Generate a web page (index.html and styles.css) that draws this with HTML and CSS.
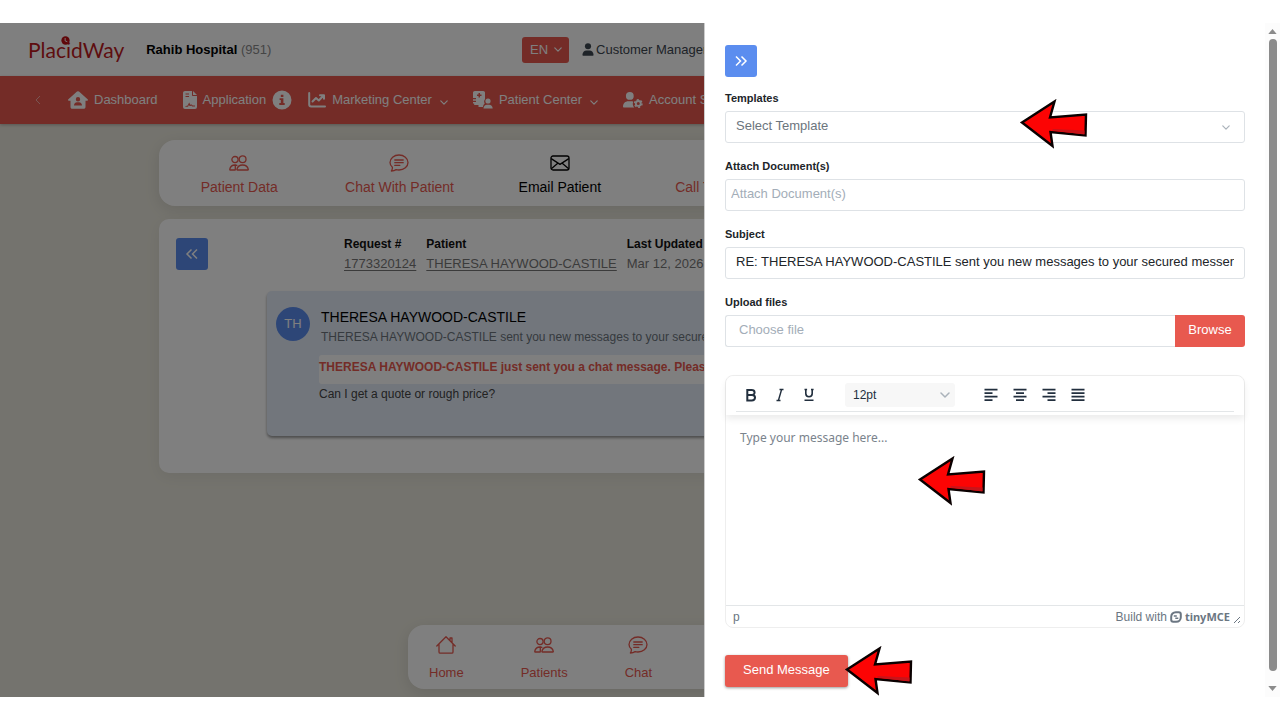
FILE: index.html
```html
<!DOCTYPE html>
<html lang="en">
<head>
    <meta charset="UTF-8">
    <meta name="viewport" content="width=device-width, initial-scale=1.0">
    <title>PlacidWay - Email Patient</title>
    <link rel="stylesheet" href="styles.css">
</head>
<body>
    <!-- Shared icons -->
    <svg class="sprite" aria-hidden="true">
        <symbol id="i-people" viewBox="0 0 20 16">
            <g fill="none" stroke="currentColor" stroke-width="1.3" stroke-linecap="round" stroke-linejoin="round">
                <circle cx="6" cy="4.6" r="3.1"/>
                <circle cx="13.6" cy="4.2" r="3.4"/>
                <path d="M8.4 15h10.4c.4 0 .6-.3.5-.7-.5-2.4-2.6-4.3-5.7-4.3s-5.2 1.9-5.7 4.3c-.1.4.1.7.5.7z"/>
                <path d="M6.2 15H1.100c-.3 0-.5-.3-.4-.6C1.200 12 3 10 6 10c.7 0 1.300.1 1.900.3M6.300 10v4.500"/>
            </g>
        </symbol>
        <symbol id="i-chat" viewBox="0 0 20 18">
            <g fill="none" stroke="currentColor" stroke-width="1.3" stroke-linecap="round" stroke-linejoin="round">
                <path d="M3.400 13.200C1.900 11.900 1 10.300 1 8.500 1 4.400 5 1 10 1s9 3.400 9 7.500S15 16 10 16c-1 0-2-.1-2.900-.4-1 .7-2.700 1.300-4.700 1.400.8-1 1.200-2.400 1-3.800z"/>
                <path d="M5.800 6h8.400M5.800 8.700h8.400M5.800 11.400h5"/>
            </g>
        </symbol>
        <symbol id="i-mail" viewBox="0 0 20 16">
            <g fill="none" stroke="currentColor" stroke-width="1.3" stroke-linejoin="round">
                <rect x="1" y="1" width="18" height="14" rx="2"/>
                <path d="M1.200 3.600L10 9.400l8.800-5.800M1.300 13.700l6.500-5.500M18.700 13.700l-6.500-5.500"/>
            </g>
        </symbol>
        <symbol id="i-phone" viewBox="0 0 18 18">
            <path fill="none" stroke="currentColor" stroke-width="1.200" d="M3 2l3-1 2 4-2 2c1 2 3 4 5 5l2-2 4 2-1 3c-1 2-4 1-6 0C6 13 3 10 2 6c-1-2 0-3 1-4z"/>
        </symbol>
        <symbol id="i-home" viewBox="0 0 20 18">
            <path fill="none" stroke="currentColor" stroke-width="1.300" stroke-linecap="round" stroke-linejoin="round" d="M.8 10L10 .8 19.200 10M3 8.200V16c0 .7.5 1.200 1.200 1.200h11.600c.7 0 1.200-.5 1.200-1.200V8.200M14 4.400V2h2v4.600"/>
        </symbol>
        <symbol id="i-down" viewBox="0 0 10 6">
            <path fill="none" stroke="currentColor" stroke-width="1.500" stroke-linecap="round" stroke-linejoin="round" d="M1 1l4 4 4-4"/>
        </symbol>
        <symbol id="i-user" viewBox="0 0 12 14">
            <circle cx="6" cy="3.500" r="3.300"/>
            <path d="M0 13c0-3 1.800-5 4.400-5h3.200c2.600 0 4.400 2 4.400 5 0 .5-.3.800-.8.800H.8C.3 13.800 0 13.500 0 13z"/>
        </symbol>
        <symbol id="i-arrow" viewBox="0 0 68 50">
            <path fill="#fc0404" stroke="#0a0000" stroke-width="2.400" d="M2 23.500L34.500 2.500l-4.500 16 36-3-.5 21L30.500 33l2 14z"/>
            <path fill="#c8141a" d="M32 31.500l1-1.500 31.500 1.500v4z"/>
        </symbol>
    </svg>

    <div class="screen">
        <div class="page">
            <header class="topbar">
                <div class="brand">
                    <a class="logo" href="#">
                        PlacidWay
                        <svg class="logo-mark" viewBox="0 0 10 10" aria-hidden="true">
                            <circle cx="5" cy="5" r="4.600" fill="#c00f14"/>
                            <path d="M4.600 2.200v3.200l2.400 1" fill="none" stroke="#fff" stroke-width="1"/>
                        </svg>
                    </a>
                    <div class="hospital"><strong>Rahib Hospital</strong> <span>(951)</span></div>
                </div>
                <button class="lang" type="button">EN <svg class="chevron"><use href="#i-down"/></svg></button>
                <a class="account" href="#"><svg><use href="#i-user"/></svg>Customer Manager</a>
            </header>

            <nav class="mainnav">
                <button class="nav-prev" type="button" aria-label="Previous">
                    <svg viewBox="0 0 6 10"><path d="M5 1L1 5l4 4" fill="none" stroke="currentColor"/></svg>
                </button>
                <a href="#">
                    <svg class="nav-icon" viewBox="0 0 20 18">
                        <path fill-rule="evenodd" d="M9 .6a1.500 1.500 0 0 1 2 0l8.600 7.600c.7.600.3 1.600-.6 1.600h-1.500V16c0 1-.8 1.800-1.800 1.800H4.300c-1 0-1.800-.8-1.800-1.800V9.800H1c-.9 0-1.300-1-.6-1.600zM10 6a2.200 2.200 0 1 0 0 4.400A2.200 2.200 0 0 0 10 6zM6 14.500h8c0-2-1.200-3.300-3-3.300H9c-1.800 0-3 1.300-3 3.300z"/>
                    </svg>
                    Dashboard
                </a>
                <a href="#">
                    <svg class="nav-icon doc" viewBox="0 0 14 18">
                        <path fill-rule="evenodd" d="M2 0h7v4c0 .6.4 1 1 1h4v11a2 2 0 0 1-2 2H2a2 2 0 0 1-2-2V2C0 .9.9 0 2 0zm8 0l4 4h-4zM2.500 2.500v1h3.500v-1zm0 2.500v1h3.500V5zM2.400 15l2-.2c.8-1.200 1.400-2.600 1.800-3.200.7 1 .7 2 1.200 2.200.5-.4.9-.6 1.300-.2l1 .8H12v1H9.200l-1-.9c-1.200 1-2 .5-2.300-.4L5 15.800H2.400z"/>
                    </svg>
                    Application
                    <svg class="info" viewBox="0 0 20 20">
                        <path fill-rule="evenodd" d="M10 .5a9.500 9.500 0 1 0 0 19 9.500 9.500 0 0 0 0-19zM8.800 4.700h2.600v2.200H8.800zM7.600 8.200h3.800v4.900h1.300v1.800H7.300v-1.800h1.500V10H7.600z"/>
                    </svg>
                </a>
                <a href="#">
                    <svg class="nav-icon chart" viewBox="0 0 18 16">
                        <path d="M1.200 1v11.500c0 1.200.8 2 2 2H17M4.500 9.500L8 6l2.800 2.500 4.500-4.700M12 3.200h4v3.600" fill="none" stroke="currentColor" stroke-width="2" stroke-linecap="round" stroke-linejoin="round"/>
                    </svg>
                    Marketing Center
                    <svg class="chevron"><use href="#i-down"/></svg>
                </a>
                <a href="#">
                    <svg class="nav-icon" viewBox="0 0 20 18">
                        <path fill-rule="evenodd" d="M1.800 0h8.400c1 0 1.800.8 1.800 1.800v6.400c-.5.600-.9 1.400-.9 2.300 0 .8.200 1.400.6 2-1 .8-1.600 2-1.700 3.500H5.500v-2H1.200v-1.500H0V11h3V9.800H0V8.300h3V7H0V1.800C0 .8.800 0 1.800 0zM5.500 2v1.500H4v1.500h1.500v1.500H7V5h1.500V3.500H7V2z"/>
                        <circle cx="15" cy="10" r="2.600"/>
                        <path d="M10.500 17.500c0-2.300 1.500-3.700 3.500-3.700h2c2 0 3.700 1.400 3.700 3.700z"/>
                    </svg>
                    Patient Center
                    <svg class="chevron"><use href="#i-down"/></svg>
                </a>
                <a class="last" href="#">
                    <svg class="nav-icon" viewBox="0 0 22 18">
                        <circle cx="7.500" cy="4.500" r="4.300"/>
                        <path d="M0 16.500c0-3.700 2.400-6 5.800-6h3.400c.7 0 1.400.1 2 .3-.8 2.300-.5 4.500 1.200 6.400H.8c-.5 0-.8-.3-.8-.7z"/>
                        <circle cx="16.800" cy="12.800" r="2.700" fill="none" stroke="currentColor" stroke-width="2"/>
                        <circle cx="16.800" cy="12.800" r="4.100" fill="none" stroke="currentColor" stroke-width="1.600" stroke-dasharray="2.150 2.150"/>
                    </svg>
                    Account S
                </a>
            </nav>

            <div class="workspace">
                <div class="tabs">
                    <a href="#"><svg><use href="#i-people"/></svg>Patient Data</a>
                    <a href="#"><svg><use href="#i-chat"/></svg>Chat With Patient</a>
                    <a class="active" href="#"><svg><use href="#i-mail"/></svg>Email Patient</a>
                    <a href="#"><svg><use href="#i-phone"/></svg>Call To Patient</a>
                </div>

                <section class="request">
                    <div class="request-head">
                        <button class="square" type="button" aria-label="Show requests">
                            <svg viewBox="0 0 14 12"><path d="M6.500 1.500L2 6l4.500 4.500M12 1.500L7.500 6l4.500 4.500"/></svg>
                        </button>
                        <table class="request-info">
                            <thead>
                                <tr><th>Request #</th><th>Patient</th><th>Last Updated</th></tr>
                            </thead>
                            <tbody>
                                <tr>
                                    <td><a href="#">1773320124</a></td>
                                    <td><a href="#">THERESA HAYWOOD-CASTILE</a></td>
                                    <td>Mar 12, 2026,</td>
                                </tr>
                            </tbody>
                        </table>
                    </div>
                    <article class="message">
                        <div class="avatar">TH</div>
                        <div class="message-text">
                            <h2>THERESA HAYWOOD-CASTILE</h2>
                            <p class="summary">THERESA HAYWOOD-CASTILE sent you new messages to your secured</p>
                            <p class="notice">THERESA HAYWOOD-CASTILE just sent you a chat message. Please</p>
                            <p class="quote">Can I get a quote or rough price?</p>
                        </div>
                    </article>
                </section>

                <nav class="dock">
                    <a href="#"><svg><use href="#i-home"/></svg>Home</a>
                    <a href="#"><svg><use href="#i-people"/></svg>Patients</a>
                    <a href="#"><svg><use href="#i-chat"/></svg>Chat</a>
                </nav>
            </div>
        </div>

        <div class="backdrop"></div>

        <aside class="drawer">
            <form class="compose">
                <button class="square" type="button" aria-label="Close">
                    <svg viewBox="0 0 14 12"><path d="M2 1.500L6.500 6 2 10.500M7.500 1.500L12 6l-4.500 4.500"/></svg>
                </button>

                <div class="field">
                    <label for="template">Templates</label>
                    <div class="select-wrap">
                        <select id="template" class="control">
                            <option>Select Template</option>
                        </select>
                        <svg class="chevron"><use href="#i-down"/></svg>
                        <svg class="arrow arrow-template"><use href="#i-arrow"/></svg>
                    </div>
                </div>
                <div class="field">
                    <label for="attach">Attach Document(s)</label>
                    <input id="attach" class="control attach" type="text" placeholder="Attach Document(s)">
                </div>
                <div class="field">
                    <label for="subject">Subject</label>
                    <input id="subject" class="control" type="text" value="RE: THERESA HAYWOOD-CASTILE sent you new messages to your secured messenger">
                </div>
                <div class="field">
                    <label for="upload">Upload files</label>
                    <div class="upload">
                        <input id="upload" class="control" type="text" placeholder="Choose file">
                        <button type="button">Browse</button>
                    </div>
                </div>

                <div class="editor">
                    <div class="toolbar">
                        <button type="button" aria-label="Bold"><svg viewBox="0 0 16 16"><path d="M4.300 3h4.200c4 0 4 4.700.6 4.900 4 .2 3.900 5.600-.4 5.600H4.300zM4.300 8H9" fill="none" stroke="currentColor" stroke-width="2"/></svg></button>
                        <button type="button" aria-label="Italic"><svg viewBox="0 0 16 16"><path d="M7.500 2.500h4M4.500 13.500h4M9.600 2.500l-3.200 11" fill="none" stroke="currentColor" stroke-width="1.400"/></svg></button>
                        <button type="button" aria-label="Underline"><svg viewBox="0 0 16 16"><path d="M4.800 2v4.500c0 4.300 6.400 4.300 6.400 0V2M3.500 13.200h9M3.500 2.500h2.600M10 2.500h2.600" fill="none" stroke="currentColor" stroke-width="1.600"/></svg></button>
                        <div class="select-wrap size">
                            <select aria-label="Font size"><option>12pt</option></select>
                            <svg class="chevron"><use href="#i-down"/></svg>
                        </div>
                        <button type="button" aria-label="Align left"><svg viewBox="0 0 16 16"><path d="M1.500 2.700h13M1.500 6.200h8M1.500 9.700h13M1.500 13.200h8"/></svg></button>
                        <button type="button" aria-label="Align center"><svg viewBox="0 0 16 16"><path d="M1.500 2.700h13M4 6.200h8M1.500 9.700h13M4 13.200h8"/></svg></button>
                        <button type="button" aria-label="Align right"><svg viewBox="0 0 16 16"><path d="M1.500 2.700h13M6.500 6.200h8M1.500 9.700h13M6.500 13.200h8"/></svg></button>
                        <button type="button" aria-label="Justify"><svg viewBox="0 0 16 16"><path d="M1.500 2.700h13M1.500 6.200h13M1.500 9.700h13M1.500 13.200h13"/></svg></button>
                    </div>
                    <textarea aria-label="Message" placeholder="Type your message here..."></textarea>
                    <div class="statusbar">
                        <span>p</span>
                        <a href="#">Build with
                            <svg class="tiny" viewBox="0 0 12 12">
                                <path d="M5.800 1.200h3a2 2 0 0 1 2 2v3c0 2.700-1.900 4.600-4.600 4.600h-3a2 2 0 0 1-2-2v-3c0-2.700 1.900-4.600 4.600-4.600z" fill="none" stroke="currentColor" stroke-width="2"/>
                                <path d="M3.800 4.300h3v1.400h-3zM5.300 6.600h3V8h-3z" fill="currentColor"/>
                            </svg>
                            <b>tinyMCE</b>
                        </a>
                        <svg class="grip" viewBox="0 0 8 8"><path d="M1 7l6-6M5 7l2-2" stroke="currentColor"/></svg>
                    </div>
                    <svg class="arrow arrow-editor"><use href="#i-arrow"/></svg>
                </div>

                <div class="actions">
                    <button class="send" type="submit">Send Message</button>
                    <svg class="arrow arrow-send"><use href="#i-arrow"/></svg>
                </div>
            </form>

            <div class="scrollbar" aria-hidden="true">
                <svg viewBox="0 0 10 6"><path d="M0 6l5-6 5 6z"/></svg>
                <div class="thumb"></div>
                <svg viewBox="0 0 10 6"><path d="M0 0l5 6 5-6z"/></svg>
            </div>
        </aside>
    </div>
</body>
</html>
```
FILE: styles.css
```css
* {
    box-sizing: border-box;
}

body {
    margin: 0;
    padding: 23px 0;
    height: 100vh;
    background: #fff;
    color: #212529;
    font-family: "Liberation Sans", Arial, sans-serif;
    font-size: 13px;
    line-height: 20px;
}

a {
    color: inherit;
    text-decoration: none;
}

button, input, select, textarea {
    font: inherit;
    color: inherit;
}

button {
    border: none;
    padding: 0;
    background: none;
    cursor: pointer;
}

svg {
    display: block;
    flex: none;
    fill: currentColor;
}

h2, p {
    margin: 0;
}

.sprite {
    position: absolute;
    width: 0;
    height: 0;
}

.screen {
    position: relative;
    height: 100%;
    overflow: hidden;
}

.page {
    display: flex;
    flex-direction: column;
    height: 100%;
    background: #e9e7dc;
    white-space: nowrap;
}

.backdrop {
    position: absolute;
    inset: 0;
    background: rgba(0, 0, 0, 0.5);
}

.chevron {
    width: 8px;
    height: 5px;
}

/* Top bar */
.topbar {
    display: flex;
    align-items: center;
    flex: none;
    height: 53px;
    padding-left: 28px;
    background: #fff;
}

.brand {
    display: flex;
    align-items: center;
    gap: 22px;
    flex: 0 0 494px;
}

.logo {
    position: relative;
    color: #bd1a1e;
    font-family: Lato, sans-serif;
    font-size: 21px;
    line-height: 28px;
}

.logo-mark {
    position: absolute;
    left: 33px;
    top: 0;
    width: 9px;
    height: 9px;
}

.hospital {
    color: #000;
}

.hospital span {
    color: #8a8a8a;
}

.lang {
    display: flex;
    align-items: center;
    gap: 6px;
    height: 26px;
    padding: 0 7px 0 8px;
    border-radius: 3px;
    background: #e8594f;
    color: #fff;
}

.account {
    display: flex;
    align-items: center;
    gap: 2px;
    margin-left: 13px;
    color: #3c4650;
}

.account svg {
    width: 12px;
    height: 13px;
}

/* Red navigation */
.mainnav {
    display: flex;
    align-items: center;
    gap: 25px;
    flex: none;
    height: 48px;
    padding-left: 35px;
    background: #e8594f;
    box-shadow: 0 1px 3px rgba(0, 0, 0, 0.25);
    color: #fff;
}

.mainnav a {
    display: flex;
    align-items: center;
    gap: 6px;
}

.nav-prev {
    margin-right: 2px;
    opacity: 0.5;
}

.nav-prev svg {
    width: 6px;
    height: 10px;
}

.nav-icon {
    width: 20px;
    height: 18px;
}

.nav-icon.doc {
    width: 14px;
}

.nav-icon.chart {
    width: 18px;
    height: 16px;
}

.info {
    width: 20px;
    height: 20px;
    margin-right: -9px;
}

.mainnav .chevron {
    margin: 4px 0 0 2px;
}

/* Workspace */
.workspace {
    display: flex;
    flex-direction: column;
    flex: 1;
    width: 962px;
    max-width: 100%;
    margin: 0 auto;
    padding: 16px 0 8px;
}

.tabs {
    display: grid;
    grid-template-columns: repeat(6, 1fr);
    padding: 13px 0 9px;
    border-radius: 16px;
    background: #fff;
    box-shadow: 0 4px 16px rgba(0, 0, 0, 0.1);
    color: #e8594f;
    font-size: 14px;
}

.tabs a, .dock a {
    display: flex;
    flex-direction: column;
    align-items: center;
    gap: 4px;
}

.tabs svg, .dock svg {
    width: 20px;
    height: 20px;
}

.tabs svg {
    height: 18px;
    margin: 1px 0;
}

.tabs .active {
    color: #000;
}

.request {
    margin-top: 13px;
    padding: 15px 17px 37px;
    border-radius: 10px;
    background: #fff;
    box-shadow: 0 4px 16px rgba(0, 0, 0, 0.06);
}

.request-head {
    display: flex;
    align-items: center;
    gap: 136px;
}

.square {
    display: flex;
    align-items: center;
    justify-content: center;
    flex: none;
    width: 32px;
    height: 32px;
    border-radius: 3px;
    background: #5b8def;
    color: #fff;
}

.square svg {
    width: 14px;
    height: 12px;
    fill: none;
    stroke: currentColor;
    stroke-width: 1.5;
}

.request-info {
    border-collapse: collapse;
    text-align: left;
    color: #777;
}

.request-info th {
    padding: 0;
    color: #111;
    font-size: 12px;
}

.request-info td {
    padding: 0 10px 0 0;
}

.request-info a {
    text-decoration: underline;
    text-underline-offset: 2px;
}

.message {
    display: flex;
    gap: 9px;
    height: 145px;
    margin: 17px 0 0 91px;
    padding: 16px 9px;
    border-radius: 5px;
    background: #e5edf9;
    box-shadow: 0 2px 3px rgba(0, 0, 0, 0.4);
    font-size: 12px;
}

.avatar {
    flex: none;
    width: 34px;
    height: 34px;
    border-radius: 50%;
    background: #5b8def;
    color: #fff;
    font-size: 13px;
    line-height: 34px;
    text-align: center;
}

.message-text {
    flex: 1;
    min-width: 0;
}

.message h2 {
    padding-left: 2px;
    color: #000;
    font-size: 14px;
    font-weight: normal;
}

.summary {
    padding-left: 2px;
    color: #6c757d;
}

.notice {
    height: 29px;
    margin-top: 8px;
    border-radius: 3px;
    background: #fff;
    color: #e8594f;
    font-weight: bold;
    line-height: 25px;
}

.quote {
    color: #444;
}

.dock {
    display: flex;
    gap: 57px;
    width: 464px;
    margin: auto auto 0;
    padding: 10px 21px 6px;
    border-radius: 16px;
    background: #fff;
    box-shadow: 0 4px 16px rgba(0, 0, 0, 0.1);
    color: #e8594f;
}

.dock a {
    gap: 8px;
}

/* Compose drawer */
.drawer {
    position: absolute;
    top: 0;
    right: 0;
    bottom: 0;
    display: flex;
    width: 45%;
    border-left: 1px solid #ccc;
    background: #fff;
}

.compose {
    flex: 1;
    min-width: 0;
    padding: 22px 20px 0;
}

.field {
    display: flex;
    flex-direction: column;
    gap: 5px;
    margin-top: 15px;
}

.square + .field {
    margin-top: 13px;
}

.field label {
    font-size: 11px;
    font-weight: bold;
    line-height: 16px;
}

.control {
    display: block;
    width: 100%;
    height: 32px;
    padding: 0 10px 3px;
    border: 1px solid #dee2e6;
    border-radius: 3px;
    background: #fff;
    outline: none;
}

.control::placeholder {
    color: #a3adb8;
    opacity: 1;
}

.attach {
    padding-left: 5px;
}

.select-wrap {
    position: relative;
}

.select-wrap select {
    appearance: none;
    color: #6c757d;
}

.select-wrap .chevron {
    position: absolute;
    top: 14px;
    right: 15px;
    color: #aab2ba;
    pointer-events: none;
}

.upload {
    display: flex;
}

.upload .control {
    flex: 1;
    min-width: 0;
    padding-left: 13px;
    border-right: none;
    border-radius: 3px 0 0 3px;
}

.upload button {
    width: 70px;
    padding-bottom: 3px;
    border-radius: 0 3px 3px 0;
    background: #e8594f;
    color: #fff;
}

.editor {
    position: relative;
    margin-top: 28px;
    border: 1px solid #eee;
    border-radius: 8px;
}

.toolbar {
    position: relative;
    display: flex;
    align-items: center;
    height: 39px;
    padding: 0 10px 2px;
    border-radius: 8px 8px 0 0;
    background: linear-gradient(#e3e6e8, #e3e6e8) center 35px / calc(100% - 20px) 1px no-repeat #fff;
    box-shadow: 0 4px 7px rgba(0, 0, 0, 0.08);
    color: #222f3e;
}

.toolbar button {
    display: flex;
    justify-content: center;
    width: 29px;
}

.toolbar svg {
    width: 16px;
    height: 16px;
    stroke: currentColor;
    stroke-width: 1.8;
}

.size {
    margin: 0 21px 0 22px;
}

.size select {
    display: block;
    width: 110px;
    height: 24px;
    padding: 0 8px;
    border: none;
    border-radius: 3px;
    background: #f7f7f7;
    color: #222f3e;
    font-size: 12px;
}

.size .chevron {
    top: 9px;
    right: 5px;
    width: 10px;
    height: 6px;
    stroke: none;
}

.editor textarea {
    display: block;
    width: 100%;
    height: 190px;
    padding: 13px 14px;
    border: none;
    outline: none;
    resize: none;
    background: none;
    font-family: "Noto Sans", sans-serif;
    font-size: 12px;
}

.editor textarea::placeholder {
    color: #7a838c;
    opacity: 1;
}

.statusbar {
    display: flex;
    align-items: center;
    height: 22px;
    padding: 0 3px 0 7px;
    border-top: 1px solid #e3e6e8;
    color: #6b7682;
    font-size: 12px;
}

.statusbar a {
    display: flex;
    align-items: center;
    gap: 3px;
    margin-left: auto;
}

.statusbar b {
    font-family: "Noto Sans", sans-serif;
    font-size: 11px;
}

.tiny {
    width: 12px;
    height: 12px;
}

.grip {
    align-self: flex-end;
    width: 8px;
    height: 8px;
    margin: 0 0 3px 3px;
}

.actions {
    position: relative;
    margin-top: 27px;
}

.send {
    height: 32px;
    padding: 0 18px 3px;
    border-radius: 3px;
    background: #e8594f;
    box-shadow: 0 1px 3px rgba(0, 0, 0, 0.4);
    color: #fff;
}

/* Red pointers over the form */
.arrow {
    position: absolute;
    width: 68px;
    height: 50px;
    pointer-events: none;
}

.arrow-template {
    top: -12px;
    right: 157px;
}

.arrow-editor {
    top: 80px;
    right: 258px;
}

.arrow-send {
    top: -9px;
    left: 120px;
}

/* Scrollbar */
.scrollbar {
    display: flex;
    flex-direction: column;
    align-items: center;
    gap: 5px;
    width: 15px;
    padding: 6px 0;
    background: #fcfcfc;
    color: #8b8b8b;
}

.scrollbar svg {
    width: 9px;
    height: 5px;
}

.thumb {
    flex: 1;
    width: 8px;
    margin-bottom: 10px;
    border-radius: 4px;
    background: #8b8b8b;
}
```
